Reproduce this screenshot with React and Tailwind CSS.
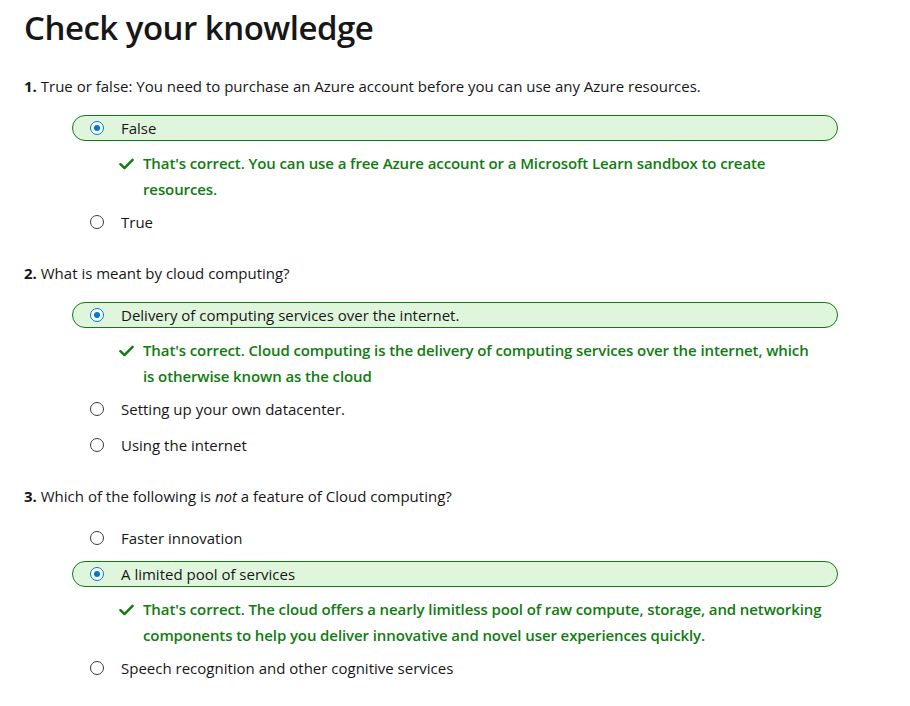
import React from 'react';

const questions = [
  {
    num: '1.',
    text: <>True or false: You need to purchase an Azure account before you can use any Azure resources.</>,
    options: [
      {
        label: 'False',
        selected: true,
        feedback: ["That's correct. You can use a free Azure account or a Microsoft Learn sandbox to create", 'resources.'],
      },
      { label: 'True' },
    ],
  },
  {
    num: '2.',
    text: <>What is meant by cloud computing?</>,
    options: [
      {
        label: 'Delivery of computing services over the internet.',
        selected: true,
        feedback: ["That's correct. Cloud computing is the delivery of computing services over the internet, which", 'is otherwise known as the cloud'],
      },
      { label: 'Setting up your own datacenter.' },
      { label: 'Using the internet' },
    ],
  },
  {
    num: '3.',
    text: <>Which of the following is <em>not</em> a feature of Cloud computing?</>,
    options: [
      { label: 'Faster innovation' },
      {
        label: 'A limited pool of services',
        selected: true,
        feedback: [
          "That's correct. The cloud offers a nearly limitless pool of raw compute, storage, and networking",
          'components to help you deliver innovative and novel user experiences quickly.',
        ],
      },
      { label: 'Speech recognition and other cognitive services' },
    ],
  },
];

const Radio = ({ checked }) => (
  <span
    className={`flex h-[14px] w-[14px] shrink-0 items-center justify-center rounded-full border ${
      checked ? 'border-[#0078d4]' : 'border-[#3b3b3b]'
    } bg-white`}
  >
    {checked && <span className="h-[6px] w-[6px] rounded-full bg-[#0078d4]" />}
  </span>
);

const Check = () => (
  <svg className="mt-[8px] h-[12px] w-[15px] shrink-0" viewBox="0 0 16 12" fill="none">
    <path d="M1.5 6.2 L5.8 10.3 L14.5 1.5" stroke="#107c10" strokeWidth="2.6" strokeLinecap="round" strokeLinejoin="round" />
  </svg>
);

const Option = ({ opt }) => (
  <div>
    <div
      className={`flex h-[26px] items-center rounded-full border pl-[17px] ${
        opt.selected ? 'border-[#107c10] bg-[#dff6dd]' : 'border-transparent'
      }`}
    >
      <Radio checked={opt.selected} />
      <span className="ml-[17px] text-[15px] leading-[26px] text-[#171717]">{opt.label}</span>
    </div>
    {opt.feedback && (
      <div className="mt-[8.5px] -mb-[2.5px] flex gap-[9px] pl-[47px]">
        <Check />
        <p className="whitespace-nowrap text-[15px] font-semibold leading-[26px] tracking-[-0.1px] text-[#107c10]">
          {opt.feedback[0]}
          <br />
          {opt.feedback[1]}
        </p>
      </div>
    )}
  </div>
);

export default function App() {
  return (
    <div className="min-h-screen bg-white pl-6 pt-[8px] text-[#171717]" style={{ fontFamily: '"Open Sans", "Noto Sans", sans-serif' }}>
      <h1 className="text-[33px] font-semibold leading-[40px] tracking-[-0.5px]">Check your knowledge</h1>
      <div className="mt-[25px]">
        {questions.map((q, i) => (
          <div key={i} className={i > 0 ? 'mt-[25px]' : ''}>
            <p className="text-[15px] leading-[26px]">
              <span className="font-bold">{q.num}</span> {q.text}
            </p>
            <div className="ml-[48px] mt-[16px] w-[766px] space-y-[10px]">
              {q.options.map((opt, j) => (
                <Option key={j} opt={opt} />
              ))}
            </div>
          </div>
        ))}
      </div>
    </div>
  );
}
